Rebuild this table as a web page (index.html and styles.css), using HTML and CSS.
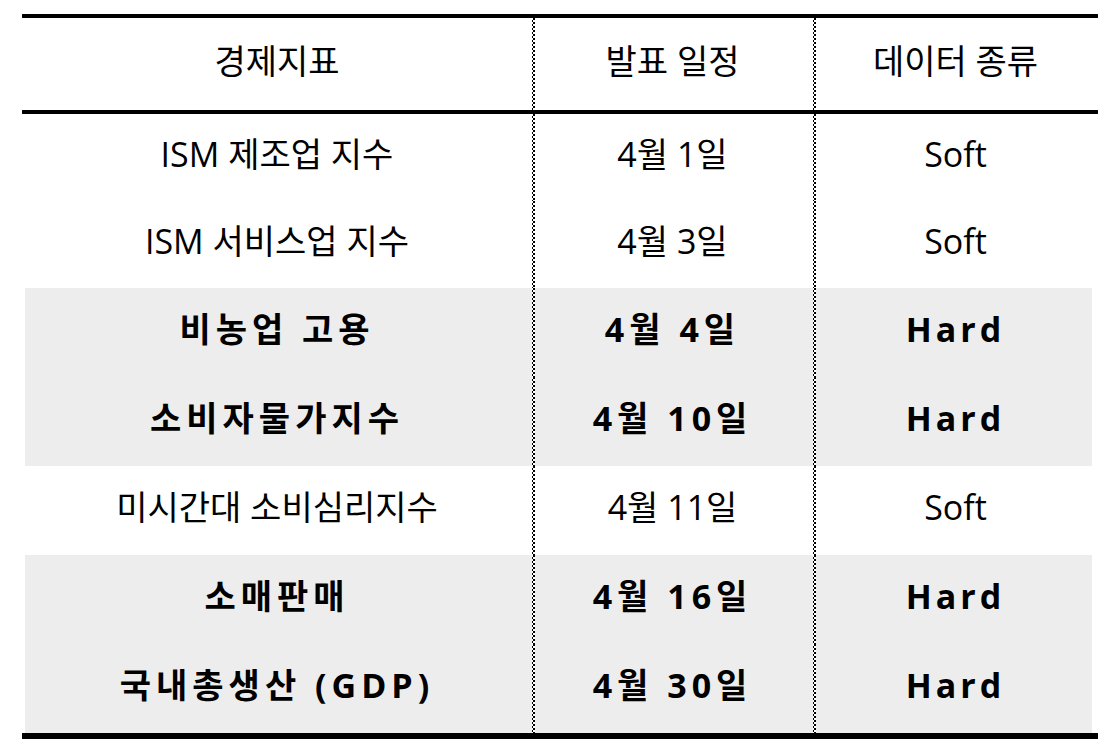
FILE: index.html
```html
<!DOCTYPE html>
<html lang="ko">
<head>
<meta charset="utf-8">
<link rel="stylesheet" href="styles.css">
</head>
<body>
<table class="indicators">
  <colgroup>
    <col class="c1"><col class="c2"><col class="c3">
  </colgroup>
  <thead>
    <tr>
      <th>경제지표</th>
      <th class="div">발표 일정</th>
      <th class="div">데이터 종류</th>
    </tr>
  </thead>
  <tbody>
    <tr class="r1">
      <td>ISM 제조업 지수</td>
      <td class="div">4월 1일</td>
      <td class="div">Soft</td>
    </tr>
    <tr class="r1">
      <td>ISM 서비스업 지수</td>
      <td class="div">4월 3일</td>
      <td class="div">Soft</td>
    </tr>
    <tr class="hard">
      <td>비농업 고용</td>
      <td class="div">4월 4일</td>
      <td class="div">Hard</td>
    </tr>
    <tr class="hard">
      <td>소비자물가지수</td>
      <td class="div">4월 10일</td>
      <td class="div">Hard</td>
    </tr>
    <tr>
      <td>미시간대 소비심리지수</td>
      <td class="div">4월 11일</td>
      <td class="div">Soft</td>
    </tr>
    <tr class="hard">
      <td>소매판매</td>
      <td class="div">4월 16일</td>
      <td class="div">Hard</td>
    </tr>
    <tr class="hard">
      <td>국내총생산 (GDP)</td>
      <td class="div">4월 30일</td>
      <td class="div">Hard</td>
    </tr>
  </tbody>
</table>
</body>
</html>
```
FILE: styles.css
```css
html, body {
  margin: 0;
  padding: 0;
  background: #ffffff;
}

body {
  padding: 14px 0 0 22px;
  font-family: "Open Sans", "Noto Sans CJK KR", sans-serif;
  color: #000;
}

.indicators {
  width: 1076px;
  border-collapse: collapse;
  border-spacing: 0;
  table-layout: fixed;
  border-top: 4px solid #000;
  border-bottom: 6px solid #000;
}

.c1 { width: 510px; }
.c2 { width: 281px; }
.c3 { width: 285px; }

.indicators th,
.indicators td {
  padding: 0 0 7px 0;
  text-align: center;
  vertical-align: middle;
  font-size: 34px;
  font-weight: 400;
  line-height: 1;
}

.indicators th {
  height: 85px;
  border-bottom: 4px solid #000;
}

.indicators td {
  height: 82px;
}

.indicators tr.r1 td {
  height: 80.2px;
}

.indicators .div {
  background-image: repeating-conic-gradient(#000 0 25%, #fff 0 50%);
  background-size: 4px 4px;
  background-repeat: repeat-y;
  background-position: -1px 0;
}

.indicators tr.hard td {
  background-color: #ededed;
  font-weight: 700;
  letter-spacing: 5px;
}

.indicators tr.hard td:last-child {
  letter-spacing: 4px;
}

.indicators tr.hard td:first-child {
  box-shadow: inset 3px 0 0 #fff;
}

.indicators tr.hard td:last-child {
  box-shadow: inset -6px 0 0 #fff;
}
```
